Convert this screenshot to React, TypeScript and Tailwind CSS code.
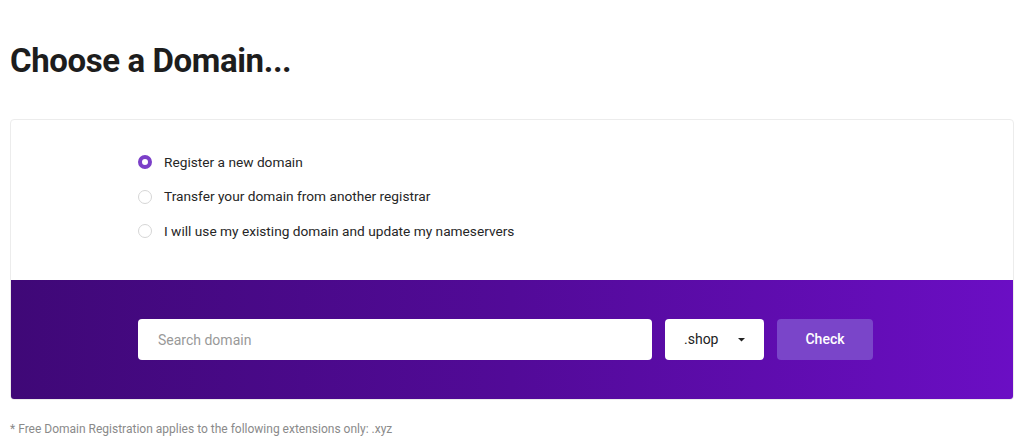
import { useState } from "react";

const options = [
  "Register a new domain",
  "Transfer your domain from another registrar",
  "I will use my existing domain and update my nameservers",
];

export default function App() {
  const [selected, setSelected] = useState(0);

  return (
    <div className="min-h-screen bg-white px-[10px] font-['Roboto',sans-serif] text-[#222]">
      <h1 className="pt-[41px] text-[33px] font-bold leading-[40px] tracking-[-0.4px] text-[#1d1d1d]">
        Choose a Domain...
      </h1>

      <div className="mt-[38px] w-[1004px] overflow-hidden rounded-[4px] border border-[#ececec]">
        <div className="flex h-[160px] flex-col gap-[16.5px] pl-[127px] pt-[33px]">
          {options.map((label, i) => (
            <label
              key={label}
              className="flex h-[18px] cursor-pointer items-center gap-[12px] text-[13.7px] text-[#262626]"
              onClick={() => setSelected(i)}
            >
              {selected === i ? (
                <span className="h-[14px] w-[14px] rounded-full border-[4px] border-[#7b3fc8] bg-white" />
              ) : (
                <span className="h-[14px] w-[14px] rounded-full border border-[#d6d6d6] bg-white" />
              )}
              {label}
            </label>
          ))}
        </div>

        <div className="flex h-[119px] items-center gap-[13px] bg-gradient-to-r from-[#3f0877] via-[#520a98] to-[#6b0ec4] pl-[127px]">
          <input
            placeholder="Search domain"
            className="h-[41px] w-[514px] rounded-[4px] bg-white px-[20px] text-[14px] text-[#333] outline-none placeholder:text-[#999]"
          />
          <button className="flex h-[41px] w-[99px] items-center rounded-[4px] bg-white pl-[19px] text-[14px] text-[#222]">
            .shop
            <svg className="ml-[20px]" width="7" height="4" viewBox="0 0 7 4">
              <path d="M0 0h7L3.5 3.5z" fill="#222" />
            </svg>
          </button>
          <button className="h-[41px] w-[96px] rounded-[4px] bg-[#7a45c9] text-[14px] font-medium text-white">
            Check
          </button>
        </div>
      </div>

      <p className="mt-[20px] text-[12px] text-[#8a8a8a]">
        * Free Domain Registration applies to the following extensions only: .xyz
      </p>
    </div>
  );
}
